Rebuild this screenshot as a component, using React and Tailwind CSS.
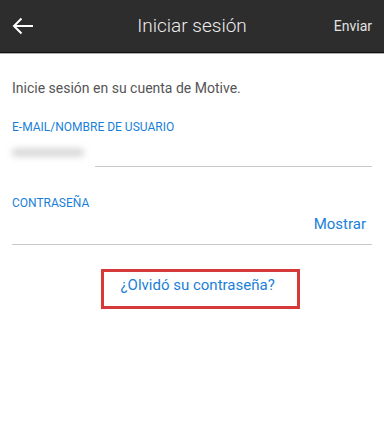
export default function App() {
    return (
        <div className="w-[384px] h-[430px] bg-white font-['Roboto',sans-serif]">
            {/* top bar */}
            <div className="h-[53px] bg-[#2d2d2d] flex items-center px-3 relative border-b border-[#111]">
                <svg width="22" height="18" viewBox="0 0 22 18" className="text-white">
                    <path d="M21 9H2M9.5 1.5L2 9l7.5 7.5" fill="none" stroke="currentColor" strokeWidth="2" />
                </svg>
                <div className="absolute inset-x-0 text-center text-[#ececec] font-light text-[19px] pointer-events-none">Iniciar sesión</div>
                <div className="ml-auto text-[#e2e2e2] text-[14px]">Enviar</div>
            </div>
            <div className="h-px bg-[#b0b0b0]" />

            <div className="px-3">
                <p className="mt-[24px] text-[14px] text-[#555]">Inicie sesión en su cuenta de Motive.</p>

                <label className="block mt-[19px] text-[12px] text-[#1a7fd8]">E-MAIL/NOMBRE DE USUARIO</label>
                <div className="relative mt-[5px] h-[26px] border-b border-[#c8c8c8]">
                    <div className="absolute left-[-4px] top-[-2px] w-[87px] h-[30px] bg-white" />
                    <div className="absolute left-[0px] top-[7px] w-[72px] h-[9px] rounded bg-[#dadada] blur-[3px]" />
                </div>

                <label className="block mt-[27px] text-[12px] text-[#1a7fd8]">CONTRASEÑA</label>
                <div className="mt-[4px] h-[29px] border-b border-[#c8c8c8] flex items-end justify-end pr-[6px] pb-[12px]">
                    <span className="text-[15px] leading-none text-[#1a7fd8]">Mostrar</span>
                </div>

                <div className="flex justify-center mt-[24px]">
                    <div className="w-[199px] h-[40px] border-[3px] border-[#d6393a] pl-[17px] pt-[1px] ml-[16px]">
                        <span className="text-[15px] text-[#1a7fd8]">¿Olvidó su contraseña?</span>
                    </div>
                </div>
            </div>
        </div>
    );
}
